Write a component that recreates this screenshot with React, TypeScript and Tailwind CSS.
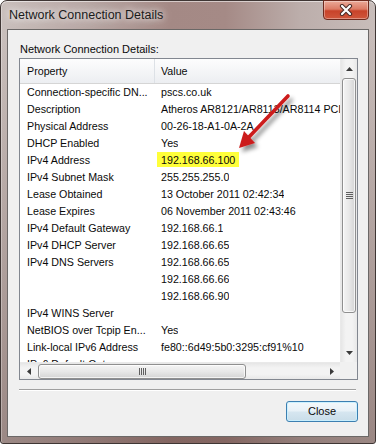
import React from 'react'

const rows: [string, string][] = [
  ['Connection-specific DN...', 'pscs.co.uk'],
  ['Description', 'Atheros AR8121/AR8113/AR8114 PCI-E Ethernet Controller'],
  ['Physical Address', '00-26-18-A1-0A-2A'],
  ['DHCP Enabled', 'Yes'],
  ['IPv4 Address', '192.168.66.100'],
  ['IPv4 Subnet Mask', '255.255.255.0'],
  ['Lease Obtained', '13 October 2011 02:42:34'],
  ['Lease Expires', '06 November 2011 02:43:46'],
  ['IPv4 Default Gateway', '192.168.66.1'],
  ['IPv4 DHCP Server', '192.168.66.65'],
  ['IPv4 DNS Servers', '192.168.66.65'],
  ['', '192.168.66.66'],
  ['', '192.168.66.90'],
  ['IPv4 WINS Server', ''],
  ['NetBIOS over Tcpip En...', 'Yes'],
  ['Link-local IPv6 Address', 'fe80::6d49:5b0:3295:cf91%10'],
  ['IPv6 Default Gateway', ''],
]

function Tri({ dir }: { dir: 'up' | 'down' | 'left' | 'right' }) {
  const pts = {
    up: '0,4 3.5,0 7,4',
    down: '0,0 3.5,4 7,0',
    left: '4,0 0,3.5 4,7',
    right: '0,0 4,3.5 0,7',
  }[dir]
  const w = dir === 'up' || dir === 'down' ? 7 : 4
  const h = dir === 'up' || dir === 'down' ? 4 : 7
  return (
    <svg width={w} height={h} viewBox={`0 0 ${w} ${h}`}>
      <polygon points={pts} fill="#3a3a3a" />
    </svg>
  )
}

export default function App() {
  return (
    <div className="w-[376px] h-[444px] font-['Liberation_Sans',Arial,sans-serif] text-[#0a0a0a]">
      <div className="relative w-full h-full flex flex-col rounded-t-[7px] rounded-b-[3px] border border-[#3f3634] shadow-[inset_0_1px_0_rgba(255,255,255,0.55),inset_1px_0_0_rgba(255,255,255,0.3)] bg-[linear-gradient(180deg,rgba(0,0,0,0)_0%,rgba(0,0,0,0)_8%,rgba(70,35,30,0.35)_100%),linear-gradient(90deg,#c9bfbc_0%,#b9a8a5_22%,#a48985_45%,#a58a86_60%,#bcaeab_80%,#c8bdba_100%)]">
        {/* Title bar */}
        <div className="h-[28px] flex items-start shrink-0">
          <div className="pl-[8px] pt-[6px] text-[12.5px] leading-[16px] text-[#1b1b1b] [text-shadow:0_0_6px_rgba(255,255,255,0.95),0_0_12px_rgba(255,255,255,0.8)]">
            Network Connection Details
          </div>
          <div className="ml-auto mr-[6px] -mt-px w-[46px] h-[20px] rounded-b-[4px] border border-[#6e2a1e] bg-[linear-gradient(180deg,#eba998_0%,#dc7b65_45%,#c8432a_55%,#d0573c_100%)] shadow-[inset_0_0_0_1px_rgba(255,255,255,0.35)] flex items-center justify-center">
            <svg width="14" height="12" viewBox="0 0 14 12">
              <path d="M3 2 L11 10 M11 2 L3 10" stroke="#4a2a26" strokeWidth="4.2" strokeLinecap="round" />
              <path d="M3 2 L11 10 M11 2 L3 10" stroke="#ffffff" strokeWidth="2.2" strokeLinecap="round" />
            </svg>
          </div>
        </div>

        {/* Client area */}
        <div className="ml-[6px] mr-[6px] mb-[6px] flex-1 flex flex-col border border-[#6b6867] bg-[#f0f0f0]">
          <div className="pl-[12px] pt-[12px] h-[26px] text-[11px] leading-[14px]">Network Connection Details:</div>

          {/* List view */}
          <div className="mt-[2px] ml-[11px] w-[339px] h-[322px] border border-[#828790] bg-white grid grid-cols-[320px_17px] grid-rows-[303px_17px] shrink-0">
            <div className="overflow-hidden text-[10.7px]">
              <div className="flex h-[25px] items-center border-b border-[#d5d5d5] bg-[linear-gradient(180deg,#fdfdfd_0%,#f3f4f6_60%,#eceef1_100%)]">
                <div className="w-[135px] h-full shrink-0 pl-[7px] flex items-center border-r border-[#dde1e6]">Property</div>
                <div className="pl-[6px]">Value</div>
              </div>
              {rows.map(([p, v], i) => (
                <div key={i} className="flex h-[17px] leading-[17px] whitespace-nowrap">
                  <div className="w-[135px] shrink-0 pl-[7px] overflow-hidden">{p}</div>
                  <div className="pl-[6px] overflow-hidden">
                    {i === 4 ? (
                      <span className="inline-block -ml-[4px] px-[4px] h-[15px] bg-[#ffff3a] overflow-hidden align-top">{v}</span>
                    ) : (
                      v
                    )}
                  </div>
                </div>
              ))}
            </div>

            {/* Vertical scrollbar */}
            <div className="flex flex-col bg-[linear-gradient(90deg,#e6e6e6_0%,#f3f3f3_30%,#f3f3f3_70%,#e8e8e8_100%)] border-l border-[#e9e9e9]">
              <div className="h-[19px] flex items-center justify-center">
                <Tri dir="up" />
              </div>
              <div className="mx-px h-[235px] rounded-[3px] border border-[#8f8f8f] bg-[linear-gradient(90deg,#f4f4f4_0%,#e8e8e8_50%,#d4d4d4_100%)] shadow-[inset_0_0_0_1px_rgba(255,255,255,0.7)] flex flex-col items-center justify-center gap-px">
                <div className="w-[7px] h-px bg-[#5f5f5f]" />
                <div className="w-[7px] h-px bg-[#5f5f5f]" />
                <div className="w-[7px] h-px bg-[#5f5f5f]" />
                <div className="w-[7px] h-px bg-[#5f5f5f]" />
              </div>
              <div className="flex-1" />
              <div className="h-[19px] flex items-center justify-center">
                <Tri dir="down" />
              </div>
            </div>

            {/* Horizontal scrollbar */}
            <div className="flex items-center bg-[linear-gradient(180deg,#e6e6e6_0%,#f3f3f3_30%,#f3f3f3_70%,#e8e8e8_100%)] border-t border-[#e9e9e9]">
              <div className="w-[18px] h-full flex items-center justify-center">
                <Tri dir="left" />
              </div>
              <div className="w-[208px] h-[15px] rounded-[3px] border border-[#8f8f8f] bg-[linear-gradient(180deg,#f4f4f4_0%,#e8e8e8_50%,#d4d4d4_100%)] shadow-[inset_0_0_0_1px_rgba(255,255,255,0.7)] flex items-center justify-center gap-px">
                <div className="w-px h-[7px] bg-[#5f5f5f]" />
                <div className="w-px h-[7px] bg-[#5f5f5f]" />
                <div className="w-px h-[7px] bg-[#5f5f5f]" />
                <div className="w-px h-[7px] bg-[#5f5f5f]" />
              </div>
              <div className="flex-1" />
              <div className="w-[17px] h-full flex items-center justify-center">
                <Tri dir="right" />
              </div>
            </div>
            <div className="bg-[#f0f0f0]" />
          </div>

          {/* Separator */}
          <div className="mt-[9px] ml-[11px] w-[337px] h-px bg-[#a0a0a0] shadow-[0_1px_0_#ffffff]" />

          {/* Close button */}
          <div className="mt-[11px] ml-auto mr-[10px] w-[72px] h-[21px] rounded-[3px] border border-[#3c7fb1] bg-[linear-gradient(180deg,#f3f8fb_0%,#e8f1f7_48%,#d6e6f0_52%,#c9dde9_100%)] shadow-[inset_0_0_0_1px_rgba(200,240,255,0.9)] flex items-center justify-center text-[11px]">
            Close
          </div>
        </div>

        {/* Red annotation arrow */}
        <svg className="absolute left-[229px] top-[87px] pointer-events-none" width="80" height="80" viewBox="0 0 80 80">
          <defs>
            <filter id="sh" x="-30%" y="-30%" width="160%" height="160%">
              <feDropShadow dx="3" dy="4" stdDeviation="2" floodColor="#000" floodOpacity="0.45" />
            </filter>
          </defs>
          <g filter="url(#sh)">
            <path d="M58 8 L18 50" stroke="#cc1b1b" strokeWidth="3.6" strokeLinecap="round" />
            <polygon points="9,60 25,55 14,43" fill="#cc1b1b" />
          </g>
        </svg>
      </div>
    </div>
  )
}
